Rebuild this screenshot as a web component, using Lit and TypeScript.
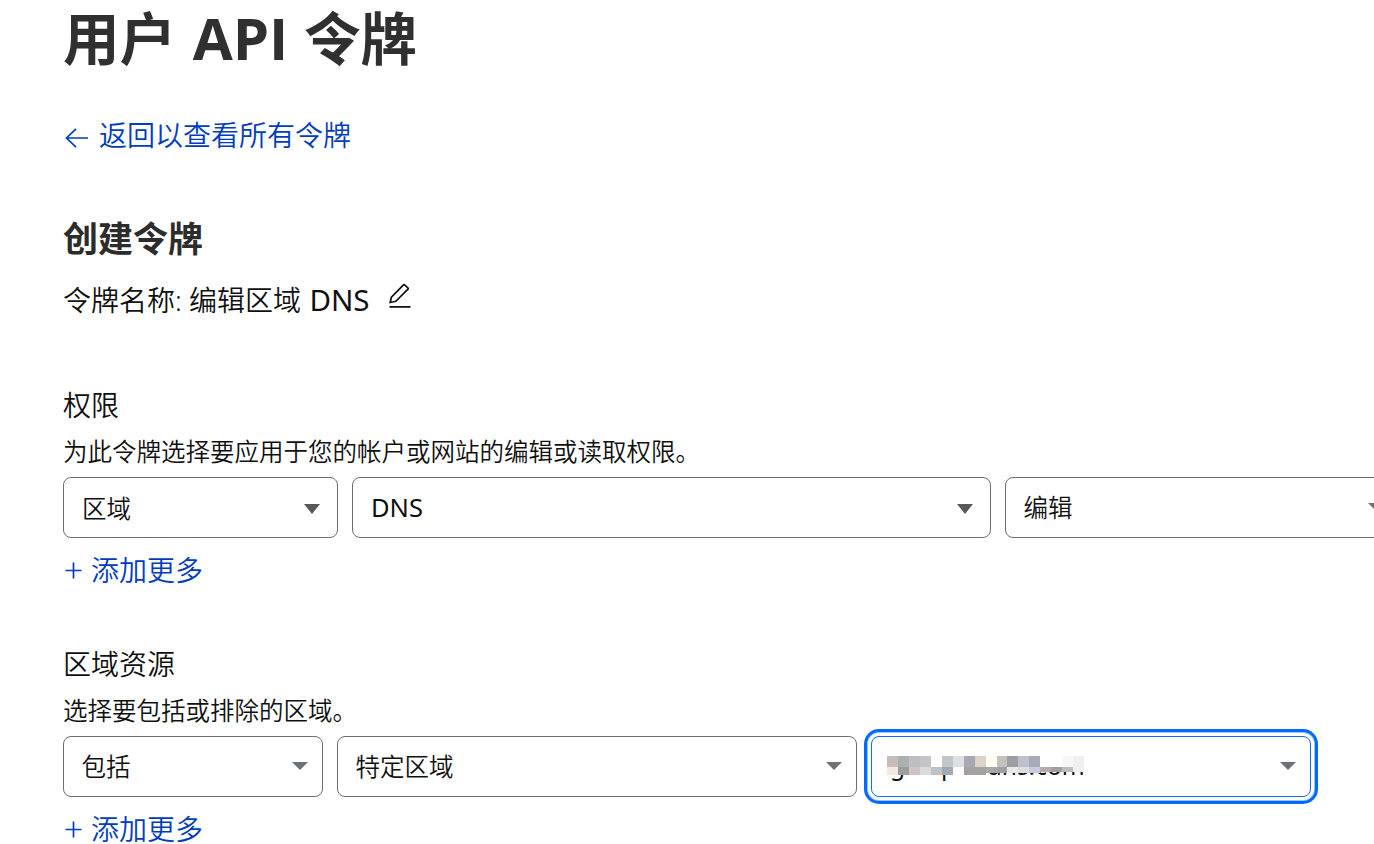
import { LitElement, html, css, svg } from "lit";
import { customElement, property } from "lit/decorators.js";

@customElement("select-box")
class SelectBox extends LitElement {
  @property() label = "";
  @property({ type: Boolean, reflect: true }) focused = false;
  @property({ type: Boolean, reflect: true }) muted = false;
  @property({ type: Boolean, reflect: true }) latin = false;
  static styles = css`
    :host { display: flex; align-items: center; justify-content: space-between; box-sizing: border-box; height: 61px;
      border: 1px solid #6e6e70; border-radius: 8px; padding: 0 17px 1px 18px; background: #fff; flex: none; }
    :host([focused]) { border-color: #0b6cff; box-shadow: 0 0 0 3px #fff, 0 0 0 4px #9cc5ff, 0 0 0 7px #0069ff; }
    :host([muted]) { padding: 0 14px 2px 17.5px; }
    :host([focused]) { padding-left: 15px; }
    :host([latin]) { font-size: 25.5px; font-weight: 400; }
    .arrow { display: block; width: 16px; height: 10px; fill: #595959; margin-top: 3px; }
    :host([muted]) .arrow { fill: #6b7177; height: 8px; margin-top: 0; }
  `;
  render() {
    return html`<slot>${this.label}</slot>
      <svg class="arrow" viewBox="0 0 16 10" preserveAspectRatio="none"><path d="M0 0h16L8 10z" /></svg>`;
  }
}

const top = ["#c7bcba", "#abb0b1", "#bdbec4", "#c6c4c6", "", "#c1c6c9", "#dce0e4", "#a8a8b3", "#ddd2ca", "#fffcf2", "#c4c2bf", "#9e9fa1", "#bcc1cc", "#a7aab7", "", "", "#f6f7f7", "#eff1f1"];
const bottom = ["#f2e8e0", "#9b9e9d", "#cfc4c1", "#dcdbdb", "#c0c1c6", "#a3a9b1", "", "#a5a1a2", "#a5a2a2", "#a8a8a6", "#a19fa4", "#e7e8e8", "#dddde0", "#c5cddd", "#b6acac", "#a39e9f", "#bdbdbf", "#eef0f0"];

@customElement("masked-value")
class MaskedValue extends LitElement {
  static styles = css`
    :host { display: block; position: relative; width: 200px; height: 36px; font-weight: 400; }
    .name { display: flex; line-height: 36px; }
    .g { box-sizing: border-box; width: 54px; padding-left: 3px; }
    .p { width: 47px; }
    .mask { position: absolute; left: 0; top: 8px; width: 198px; height: 20px; }
  `;
  render() {
    const row = (cells: string[], y: number, h: number) =>
      cells.map((c, i) => {
        const cut = y > 0 ? (i > 13 ? 3 : i > 8 ? 2 : 0) : 0;
        return c ? svg`<rect x=${i * 10.95} y=${y} width="10.95" height=${h - cut} fill=${c} />` : svg``;
      });
    return html`<div class="name"><span class="g">g</span><span class="p">p</span><span>ans.com</span></div>
      <svg class="mask" viewBox="0 0 198 20" shape-rendering="crispEdges">
        <rect width="198" height="16" fill="#fff" /><rect width="88" height="19" fill="#fff" />${row(top, 0, 11)}${row(bottom, 11, 8)}
      </svg>`;
  }
}

@customElement("app-root")
class AppRoot extends LitElement {
  static styles = css`
    :host { display: block; box-sizing: border-box; height: 844px; overflow: hidden; background: #fff; color: #101010;
      padding-left: 63px; font-family: "Noto Sans", "Noto Sans CJK SC", sans-serif; font-size: 24.5px; font-weight: 350; }
    h1, h2, h3, p { margin: 0; }
    h1 { font-family: "Open Sans", "Noto Sans CJK SC", sans-serif; font-size: 56.5px; line-height: 77px; height: 80px; font-weight: 700; color: #303030; white-space: nowrap; }
    .api { font-size: 58px; line-height: 1; margin: 0 1px 0 2px; }
    h2 { font-size: 35px; line-height: 50px; margin-top: 58px; font-weight: 700; color: #2c2c2c; }
    h3 { font-size: 28px; line-height: 40px; font-weight: 350; }
    .back { display: flex; align-items: center; font-size: 28px; line-height: 40px; height: 40px; margin-top: 36px; color: #003cc0; }
    .back svg { width: 24px; height: 20px; margin: 4px 10px 0 2px; }
    .back span { margin-top: -2px; }
    .name { display: flex; align-items: center; font-size: 28px; line-height: 40px; height: 40px; margin-top: 16px; }
    .latin { font-weight: 400; font-size: 29.5px; line-height: 1; margin-left: 1px; }
    .name svg { width: 24px; height: 26px; margin: -9px 0 0 18px; }
    .section { margin-top: 65px; }
    .second { margin-top: 59px; }
    .desc { line-height: 38px; margin-top: 8px; height: 36px; white-space: nowrap; }
    .row { display: flex; gap: 14px; margin-top: 8px; }
    .add { display: flex; align-items: center; color: #003cc0; font-size: 28px; line-height: 30px; height: 30px; margin-top: 17px; }
    .add svg { width: 17px; height: 17px; margin: 0 9px 0 2px; }
    .w275 { width: 275px; } .w639 { width: 639px; } .w394 { width: 394px; }
    .w260 { width: 260px; } .w520 { width: 520px; } .w440 { width: 440px; }
    svg { fill: none; stroke: currentColor; stroke-width: 1.7; flex: none; }
  `;
  private add() {
    return html`<div class="add"><svg viewBox="0 0 17 17"><path d="M8.5 0.5v16M0.5 8.5h16" /></svg><span>添加更多</span></div>`;
  }
  render() {
    return html`
      <h1>用户 <span class="api">API</span> 令牌</h1>
      <div class="back"><svg viewBox="0 0 24 20"><path d="M23 10H1.5M11 .8L1.5 10l9.5 9.2" /></svg><span>返回以查看所有令牌</span></div>
      <h2>创建令牌</h2>
      <div class="name"><span>令牌名称: 编辑区域 <span class="latin">DNS</span></span>
        <svg viewBox="0 0 24 26"><path d="M2.2 19.5L3.4 14.2 15.5 1.8Q16 1.3 16.6 1.8L20 5Q20.6 5.6 20 6.2L7.8 18.3zM1.5 23.8h21" /></svg></div>
      <section class="section">
        <h3>权限</h3>
        <p class="desc">为此令牌选择要应用于您的帐户或网站的编辑或读取权限。</p>
        <div class="row">
          <select-box class="w275" label="区域"></select-box>
          <select-box class="w639" latin label="DNS"></select-box>
          <select-box class="w394" muted label="编辑"></select-box>
        </div>
        ${this.add()}
      </section>
      <section class="second">
        <h3>区域资源</h3>
        <p class="desc">选择要包括或排除的区域。</p>
        <div class="row">
          <select-box class="w260" muted label="包括"></select-box>
          <select-box class="w520" muted label="特定区域"></select-box>
          <select-box class="w440" muted focused><masked-value></masked-value></select-box>
        </div>
        ${this.add()}
      </section>`;
  }
}
